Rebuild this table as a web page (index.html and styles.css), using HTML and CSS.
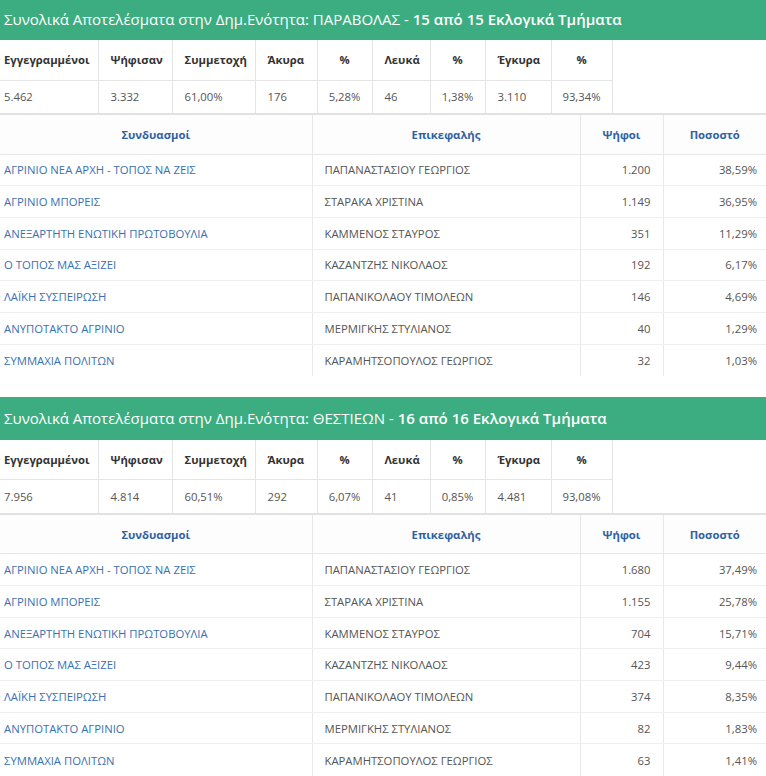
FILE: index.html
```html
<!DOCTYPE html>
<html lang="el">
<head>
<meta charset="utf-8">
<title>Αποτελέσματα</title>
<link rel="stylesheet" href="styles.css">
</head>
<body>
<div class="page">

<section class="unit">
  <h2 class="unit-title">Συνολικά Αποτελέσματα στην Δημ.Ενότητα: ΠΑΡΑΒΟΛΑΣ - <span class="count">15 από 15 Εκλογικά Τμήματα</span></h2>
  <table class="stats">
    <colgroup><col class="c1"><col class="c2"><col class="c3"><col class="c4"><col class="c5"><col class="c6"><col class="c7"><col class="c8"><col class="c9"></colgroup>
    <tr class="stats-head">
      <th>Εγγεγραμμένοι</th><th>Ψήφισαν</th><th>Συμμετοχή</th><th>Άκυρα</th><th class="pct">%</th><th>Λευκά</th><th class="pct">%</th><th>Έγκυρα</th><th class="pct">%</th>
    </tr>
    <tr class="stats-data">
      <td>5.462</td><td>3.332</td><td>61,00%</td><td>176</td><td class="pct">5,28%</td><td>46</td><td class="pct">1,38%</td><td>3.110</td><td class="pct">93,34%</td>
    </tr>
  </table>
  <table class="results">
    <colgroup><col class="r1"><col class="r2"><col class="r3"><col class="r4"></colgroup>
    <tr class="results-head"><th>Συνδυασμοί</th><th>Επικεφαλής</th><th>Ψήφοι</th><th>Ποσοστό</th></tr>
    <tr><td class="party">ΑΓΡΙΝΙΟ ΝΕΑ ΑΡΧΗ - ΤΟΠΟΣ ΝΑ ΖΕΙΣ</td><td>ΠΑΠΑΝΑΣΤΑΣΙΟΥ ΓΕΩΡΓΙΟΣ</td><td class="votes">1.200</td><td class="perc">38,59%</td></tr>
    <tr><td class="party">ΑΓΡΙΝΙΟ ΜΠΟΡΕΙΣ</td><td>ΣΤΑΡΑΚΑ ΧΡΙΣΤΙΝΑ</td><td class="votes">1.149</td><td class="perc">36,95%</td></tr>
    <tr><td class="party">ΑΝΕΞΑΡΤΗΤΗ ΕΝΩΤΙΚΗ ΠΡΩΤΟΒΟΥΛΙΑ</td><td>ΚΑΜΜΕΝΟΣ ΣΤΑΥΡΟΣ</td><td class="votes">351</td><td class="perc">11,29%</td></tr>
    <tr><td class="party">Ο ΤΟΠΟΣ ΜΑΣ ΑΞΙΖΕΙ</td><td>ΚΑΖΑΝΤΖΗΣ ΝΙΚΟΛΑΟΣ</td><td class="votes">192</td><td class="perc">6,17%</td></tr>
    <tr><td class="party">ΛΑΪΚΗ ΣΥΣΠΕΙΡΩΣΗ</td><td>ΠΑΠΑΝΙΚΟΛΑΟΥ ΤΙΜΟΛΕΩΝ</td><td class="votes">146</td><td class="perc">4,69%</td></tr>
    <tr><td class="party">ΑΝΥΠΟΤΑΚΤΟ ΑΓΡΙΝΙΟ</td><td>ΜΕΡΜΙΓΚΗΣ ΣΤΥΛΙΑΝΟΣ</td><td class="votes">40</td><td class="perc">1,29%</td></tr>
    <tr><td class="party">ΣΥΜΜΑΧΙΑ ΠΟΛΙΤΩΝ</td><td>ΚΑΡΑΜΗΤΣΟΠΟΥΛΟΣ ΓΕΩΡΓΙΟΣ</td><td class="votes">32</td><td class="perc">1,03%</td></tr>
  </table>
</section>

<section class="unit">
  <h2 class="unit-title">Συνολικά Αποτελέσματα στην Δημ.Ενότητα: ΘΕΣΤΙΕΩΝ - <span class="count">16 από 16 Εκλογικά Τμήματα</span></h2>
  <table class="stats">
    <colgroup><col class="c1"><col class="c2"><col class="c3"><col class="c4"><col class="c5"><col class="c6"><col class="c7"><col class="c8"><col class="c9"></colgroup>
    <tr class="stats-head">
      <th>Εγγεγραμμένοι</th><th>Ψήφισαν</th><th>Συμμετοχή</th><th>Άκυρα</th><th class="pct">%</th><th>Λευκά</th><th class="pct">%</th><th>Έγκυρα</th><th class="pct">%</th>
    </tr>
    <tr class="stats-data">
      <td>7.956</td><td>4.814</td><td>60,51%</td><td>292</td><td class="pct">6,07%</td><td>41</td><td class="pct">0,85%</td><td>4.481</td><td class="pct">93,08%</td>
    </tr>
  </table>
  <table class="results">
    <colgroup><col class="r1"><col class="r2"><col class="r3"><col class="r4"></colgroup>
    <tr class="results-head"><th>Συνδυασμοί</th><th>Επικεφαλής</th><th>Ψήφοι</th><th>Ποσοστό</th></tr>
    <tr><td class="party">ΑΓΡΙΝΙΟ ΝΕΑ ΑΡΧΗ - ΤΟΠΟΣ ΝΑ ΖΕΙΣ</td><td>ΠΑΠΑΝΑΣΤΑΣΙΟΥ ΓΕΩΡΓΙΟΣ</td><td class="votes">1.680</td><td class="perc">37,49%</td></tr>
    <tr><td class="party">ΑΓΡΙΝΙΟ ΜΠΟΡΕΙΣ</td><td>ΣΤΑΡΑΚΑ ΧΡΙΣΤΙΝΑ</td><td class="votes">1.155</td><td class="perc">25,78%</td></tr>
    <tr><td class="party">ΑΝΕΞΑΡΤΗΤΗ ΕΝΩΤΙΚΗ ΠΡΩΤΟΒΟΥΛΙΑ</td><td>ΚΑΜΜΕΝΟΣ ΣΤΑΥΡΟΣ</td><td class="votes">704</td><td class="perc">15,71%</td></tr>
    <tr><td class="party">Ο ΤΟΠΟΣ ΜΑΣ ΑΞΙΖΕΙ</td><td>ΚΑΖΑΝΤΖΗΣ ΝΙΚΟΛΑΟΣ</td><td class="votes">423</td><td class="perc">9,44%</td></tr>
    <tr><td class="party">ΛΑΪΚΗ ΣΥΣΠΕΙΡΩΣΗ</td><td>ΠΑΠΑΝΙΚΟΛΑΟΥ ΤΙΜΟΛΕΩΝ</td><td class="votes">374</td><td class="perc">8,35%</td></tr>
    <tr><td class="party">ΑΝΥΠΟΤΑΚΤΟ ΑΓΡΙΝΙΟ</td><td>ΜΕΡΜΙΓΚΗΣ ΣΤΥΛΙΑΝΟΣ</td><td class="votes">82</td><td class="perc">1,83%</td></tr>
    <tr><td class="party">ΣΥΜΜΑΧΙΑ ΠΟΛΙΤΩΝ</td><td>ΚΑΡΑΜΗΤΣΟΠΟΥΛΟΣ ΓΕΩΡΓΙΟΣ</td><td class="votes">63</td><td class="perc">1,41%</td></tr>
  </table>
</section>

</div>
</body>
</html>
```

FILE: styles.css
```css
* { box-sizing: border-box; }

html, body {
  margin: 0;
  padding: 0;
  background: #ffffff;
}

body {
  font-family: "Open Sans", "Noto Sans", "DejaVu Sans", sans-serif;
  color: #555555;
  overflow: hidden;
}

.page {
  width: 766px;
  margin-top: -3px;
  display: flex;
  flex-direction: column;
  gap: 21px;
}

.unit {
  display: flex;
  flex-direction: column;
}

.unit-title {
  margin: 0;
  height: 43px;
  display: flex;
  align-items: center;
  padding: 0 4px;
  background: #3bad80;
  color: #ffffff;
  font-size: 15px;
  font-weight: 400;
  white-space: pre;
  letter-spacing: 0;
}

.unit-title .count {
  font-weight: 600;
}

table {
  border-collapse: collapse;
  table-layout: fixed;
}

.stats {
  width: 612px;
  font-size: 11.3px;
}

.stats .c1 { width: 98px; }
.stats .c2 { width: 74px; }
.stats .c3 { width: 83px; }
.stats .c4 { width: 62px; }
.stats .c5 { width: 55px; }
.stats .c6 { width: 58px; }
.stats .c7 { width: 55px; }
.stats .c8 { width: 66px; }
.stats .c9 { width: 61px; }

.stats th,
.stats td {
  padding: 0 0 0 12px;
  text-align: left;
  border-right: 1px solid #e4e4e4;
  white-space: nowrap;
}

.stats th:first-child,
.stats td:first-child {
  padding-left: 4px;
}

.stats .pct {
  text-align: center;
  padding: 0;
}

.stats-head th {
  height: 40px;
  font-weight: 700;
  color: #333333;
  border-bottom: 1px solid #e4e4e4;
}

.stats-data td {
  height: 33px;
  color: #555555;
}

.results {
  width: 766px;
  font-size: 11.3px;
  border-top: 2px solid #e2e2e2;
}

.results .r1 { width: 312px; }
.results .r2 { width: 268px; }
.results .r3 { width: 83px; }
.results .r4 { width: 103px; }

.results th,
.results td {
  border-right: 1px solid #e8e8e8;
  white-space: nowrap;
}

.results th:last-child,
.results td:last-child {
  border-right: none;
}

.results-head th {
  height: 40px;
  text-align: center;
  font-weight: 700;
  color: #2d62a5;
  background: #fdfdfd;
  border-bottom: 1px solid #e6e6e6;
}

.results td {
  height: 31.7px;
  padding: 0 0 0 12px;
  color: #555555;
  border-bottom: 1px solid #efefef;
}

.results tr:last-child td {
  border-bottom: none;
}

.results td.party {
  padding-left: 4px;
  color: #3a70b3;
}

.results td.votes {
  text-align: right;
  padding: 0 12px 0 0;
}

.results td.perc {
  text-align: right;
  padding: 0 9px 0 0;
}
```
